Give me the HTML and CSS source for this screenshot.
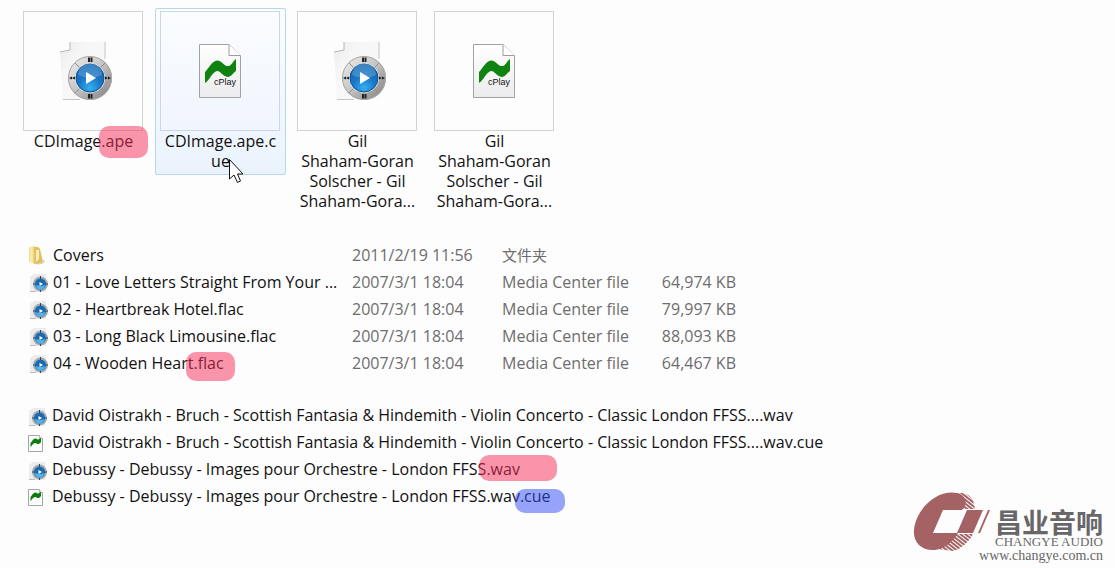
FILE: index.html
```html
<!DOCTYPE html>
<html lang="zh-CN">
<head>
<meta charset="utf-8" />
<meta name="viewport" content="width=device-width,initial-scale=1.0" />
<title>Audio files</title>
<link rel="stylesheet" href="styles.css">
</head>

<body>
<svg class="defs" width="0" height="0" aria-hidden="true">
	<defs>
		<linearGradient id="paper" x1="0" y1="0" x2="1" y2="1">
			<stop offset="0" stop-color="#e9e9e9"/><stop offset=".3" stop-color="#f6f6f6"/><stop offset="1" stop-color="#fbfbfb"/>
		</linearGradient>
		<linearGradient id="sheet" x1="0" y1="0" x2="0" y2="1">
			<stop offset="0" stop-color="#fff"/><stop offset="1" stop-color="#ececee"/>
		</linearGradient>
		<linearGradient id="ring" x1="0" y1="0" x2="1" y2="1">
			<stop offset="0" stop-color="#f2f2f2"/><stop offset=".5" stop-color="#c4c2c0"/><stop offset="1" stop-color="#7e7c7a"/>
		</linearGradient>
		<radialGradient id="ball" cx=".5" cy=".85" r=".8">
			<stop offset="0" stop-color="#35b0f0"/><stop offset=".5" stop-color="#1a78c8"/><stop offset="1" stop-color="#1460a8"/>
		</radialGradient>
		<linearGradient id="fold" x1="0" y1="0" x2="1" y2="0">
			<stop offset="0" stop-color="#f3dc8c"/><stop offset=".5" stop-color="#fbeeb4"/><stop offset="1" stop-color="#e2bd50"/>
		</linearGradient>
		<pattern id="hatch" width="3" height="3" patternUnits="userSpaceOnUse" patternTransform="rotate(38)">
			<rect width="3" height="2" fill="#a56264"/>
		</pattern>
	</defs>
	<symbol id="media" viewBox="0 0 64 64">
		<path d="M19 3H54V60H12L9 13Z" fill="url(#paper)"/>
		<path d="M19 3V11L9 13" fill="#fff" stroke="#b5b5b5"/>
		<path d="M54 3V20M12 60.500H29" stroke="#c4c4c4" fill="none"/>
		<circle cx="39" cy="39" r="22" fill="url(#ring)"/>
		<circle cx="39" cy="39" r="21.500" fill="none" stroke="#a9a7a5"/>
		<path d="M24 24L30 30M54 24L48 30M24 54L30 48M54 54L48 48" stroke="#908e8c"/>
		<circle cx="39" cy="39" r="15" fill="#dcebf5"/>
		<circle cx="39" cy="39" r="14" fill="url(#ball)" stroke="#14508e"/>
		<path d="M27 36A12 12 0 0 1 51 36Q39 42 27 36Z" fill="#8cc6ee" opacity=".35"/>
		<path d="M35 33V45L45 39Z" fill="#fff"/>
		<path d="M38 18.500V23M40.500 18.500V23M38 55V59.500M40.500 55V59.500" stroke="#222" stroke-width="2"/>
		<path d="M18 39L21 37.500V40.500ZM21 39L24 37.500V40.500ZM60 39L57 37.500V40.500ZM57 39L54 37.500V40.500Z" fill="#222"/>
	</symbol>
	<symbol id="media-small" viewBox="0 0 20 20">
		<path d="M5 1H17V19H1V4Z" fill="#ececec"/>
		<path d="M1 18.500H7" stroke="#bbb"/>
		<circle cx="11.500" cy="11" r="7.500" fill="#a3a8ad"/>
		<circle cx="11.500" cy="11" r="6" fill="#8fb0c8"/>
		<circle cx="11.500" cy="11" r="5.500" fill="#1d69ad"/>
		<path d="M7 12A4.500 4.500 0 0 0 16 12Q11.500 14 7 12Z" fill="#4fb4ec"/>
		<path d="M10.500 9V13L14 11Z" fill="#fff"/>
		<path d="M11.500 3V6M11.500 17V19M4 11H6.500M16.500 11H19" stroke="#24486a"/>
	</symbol>
	<symbol id="cue" viewBox="0 0 64 64">
		<path d="M11.500 5.500H41L52.500 17V58.500H11.500Z" fill="url(#sheet)" stroke="#a2a2a6"/>
		<path d="M41 5.500V16.500H52.500" fill="#fff" stroke="#9c9ca2"/>
		<path d="M17 33C21 29 24 22 29 21.500C35 22 36 28 41 27C44 26 45 22 48 20V32C45 34 43 38 40 38C34 37 33 32 29 32C24 33 22 41 17 44Z" fill="#0f820f"/>
		<text x="26" y="46" font-size="9" class="cue-text">cPlay</text>
	</symbol>
	<symbol id="cue-small" viewBox="0 0 20 20">
		<path d="M.500 1.500H11.500L14.500 4.500V17.500H.500Z" fill="#fcfcfc" stroke="#a5a5a5"/>
		<path d="M11.500 1.500V4.500H14.500" fill="#fff" stroke="#b5b5b5"/>
		<path d="M2.500 9C4.500 7 5.500 4 7.500 4.500C9.500 5 9.500 7 13 3.500V8C11 10.500 10 10.500 7.500 9C5.500 8.500 4.500 11 2.500 13Z" fill="#0b7d0b"/>
	</symbol>
	<symbol id="folder" viewBox="0 0 20 20">
		<path d="M7 8H11L14 14L16 15L13 18L7 18.500Z" fill="#dccf9f"/>
		<path d="M5 1H9L11 3L13 12V16L6 18Z" fill="#e2bf58"/>
		<path d="M0 1L5 0L6 2V18L0 16Z" fill="url(#fold)"/>
		<path d="M7 4H10V13L7 16Z" fill="#fbf0bd"/>
	</symbol>
</svg>

<div class="page">
	<ul class="tiles">
		<li class="tile">
			<div class="thumb"><svg><use href="#media"/></svg></div>
			<div class="label">CDImage<span class="mark mark-ape">.ape</span></div>
		</li>
		<li class="tile hover">
			<div class="thumb"><svg><use href="#cue"/></svg></div>
			<div class="label">CDImage.ape.c<br>ue</div>
			<svg class="cursor" viewBox="0 0 16 26"><path d="M1.500 1.500V21L6 17L9.500 24.500L12.500 23L9.500 16H15Z" fill="#fff" stroke="#111"/></svg>
		</li>
		<li class="tile">
			<div class="thumb"><svg><use href="#media"/></svg></div>
			<div class="label">Gil<br>Shaham-Goran<br>Solscher - Gil<br>Shaham-Gora...</div>
		</li>
		<li class="tile">
			<div class="thumb"><svg><use href="#cue"/></svg></div>
			<div class="label">Gil<br>Shaham-Goran<br>Solscher - Gil<br>Shaham-Gora...</div>
		</li>
	</ul>

	<table class="files">
		<tr>
			<td class="name"><svg><use href="#folder"/></svg>Covers</td>
			<td class="date">2011/2/19 11:56</td>
			<td class="type cn">文件夹</td>
			<td class="size"></td>
		</tr>
		<tr>
			<td class="name"><svg><use href="#media-small"/></svg>01 - Love Letters Straight From Your ...</td>
			<td class="date">2007/3/1 18:04</td>
			<td class="type">Media Center file</td>
			<td class="size">64,974 KB</td>
		</tr>
		<tr>
			<td class="name"><svg><use href="#media-small"/></svg>02 - Heartbreak Hotel.flac</td>
			<td class="date">2007/3/1 18:04</td>
			<td class="type">Media Center file</td>
			<td class="size">79,997 KB</td>
		</tr>
		<tr>
			<td class="name"><svg><use href="#media-small"/></svg>03 - Long Black Limousine.flac</td>
			<td class="date">2007/3/1 18:04</td>
			<td class="type">Media Center file</td>
			<td class="size">88,093 KB</td>
		</tr>
		<tr>
			<td class="name"><svg><use href="#media-small"/></svg>04 - Wooden Heart<span class="mark mark-flac">.flac</span></td>
			<td class="date">2007/3/1 18:04</td>
			<td class="type">Media Center file</td>
			<td class="size">64,467 KB</td>
		</tr>
	</table>

	<div class="bottom">
		<ul class="list">
			<li><svg><use href="#media-small"/></svg>David Oistrakh - Bruch - Scottish Fantasia &amp; Hindemith - Violin Concerto - Classic London FFSS....wav</li>
			<li><svg><use href="#cue-small"/></svg>David Oistrakh - Bruch - Scottish Fantasia &amp; Hindemith - Violin Concerto - Classic London FFSS....wav.cue</li>
			<li><svg><use href="#media-small"/></svg>Debussy - Debussy - Images pour Orchestre - London FFSS<span class="mark mark-wav">.wav</span></li>
			<li><svg><use href="#cue-small"/></svg>Debussy - Debussy - Images pour Orchestre - London FFSS.wav<span class="mark mark-cue">.cue</span></li>
		</ul>

		<div class="brand">
			<svg viewBox="0 0 78 60">
				<path d="M40 3C46 -1 56 1 60 8L62 17H46Z" fill="url(#hatch)"/>
				<path d="M43 42H60C56 50 48 57 40 59L25 57Z" fill="url(#hatch)"/>
				<path d="M44 1C24 -3 3 17 1 38C0 50 8 59 22 58C32 57 40 49 45 41H20L30 18H49C56 10 52 3 44 1Z" fill="#a56264"/>
				<path d="M54 18H70L60 41H44Z" fill="#a56264"/>
				<path d="M75 18H77L67 41H65Z" fill="#a56264"/>
			</svg>
			<div class="brand-text">
				<div class="brand-cn">昌业音响</div>
				<div class="brand-en">CHANGYE AUDIO</div>
				<div class="brand-url">www.changye.com.cn</div>
			</div>
		</div>
	</div>
</div>
</body>
</html>
```
FILE: styles.css
```css
*{box-sizing:border-box;}
html, body{padding:0; margin:0;}
body{font-family:"Open Sans", "Noto Sans CJK SC", sans-serif; font-size:16px; line-height:20px; color:#111; background:#fdfdfd;}
ul{list-style:none; margin:0; padding:0;}
.defs{position:absolute;}
.page{display:flex; flex-direction:column; min-height:100vh; padding:8px 12px 5px 18px;}

.tiles{display:flex; gap:6px; align-items:flex-start; height:234px;}
.tile{width:131px; padding:2px 4px; border:1px solid transparent; text-align:center; position:relative;}
.tile.hover{border-color:#b8d6ee; border-radius:2px; background:linear-gradient(#fbfdff, #eaf3fc);}
.thumb{width:120px; height:120px; border:1px solid #d2d2d6; display:flex; align-items:center; justify-content:center;}
.hover .thumb{border-color:#cbd6e4; background:linear-gradient(#fafcff, #f1f5fd);}
.thumb svg{width:64px; height:64px;}
.cue-text{font-family:"Liberation Sans", sans-serif; fill:#111;}
.label{padding-bottom:1px; white-space:nowrap;}
.cursor{position:absolute; left:72px; top:149px; width:16px; height:26px;}

.files{border-collapse:collapse; table-layout:fixed; width:707px; margin-left:11px;}
.files td{height:27px; padding:0 0 2px; white-space:nowrap; color:#6d6d6d;}
.files .name{width:323px; padding:0; color:#111;}
.files .date{width:150px;}
.files .type{width:150px;}
.files .cn{font-size:15px;}
.files .size{text-align:right;}
.files svg, .list svg{width:20px; height:20px; margin-right:4px; vertical-align:middle;}
.bottom{flex:1; display:flex; justify-content:space-between;}
.list{margin:25px 0 0 10px;}
.list li{height:27px; line-height:26px; white-space:nowrap;}

/* highlighter strokes over the extensions */
.mark{position:relative;}
.mark:after{content:""; position:absolute; left:-2px; top:-4px; width:49px; height:32px; border-radius:10px; background:rgba(246,44,90,.5);}
.mark-flac:after{left:-7px; top:0; height:29px;}
.mark-wav:after{left:-7px; top:-3px; width:78px; height:26px;}
.mark-cue:after{left:-5px; top:4px; width:50px; height:24px; background:rgba(45,75,245,.5);}

.brand{display:flex; align-self:flex-end; color:#686668;}
.brand svg{width:78px; height:60px; margin-right:-12px;}
.brand-text{text-align:right; padding-top:16px;}
.brand-cn{font-family:"Noto Sans CJK SC", sans-serif; font-size:27px; font-weight:700; line-height:28px;}
.brand-en{font-family:"Liberation Serif", serif; font-size:13px; line-height:12px;}
.brand-url{font-family:"Liberation Serif", serif; font-size:14px; line-height:15px;}
```
